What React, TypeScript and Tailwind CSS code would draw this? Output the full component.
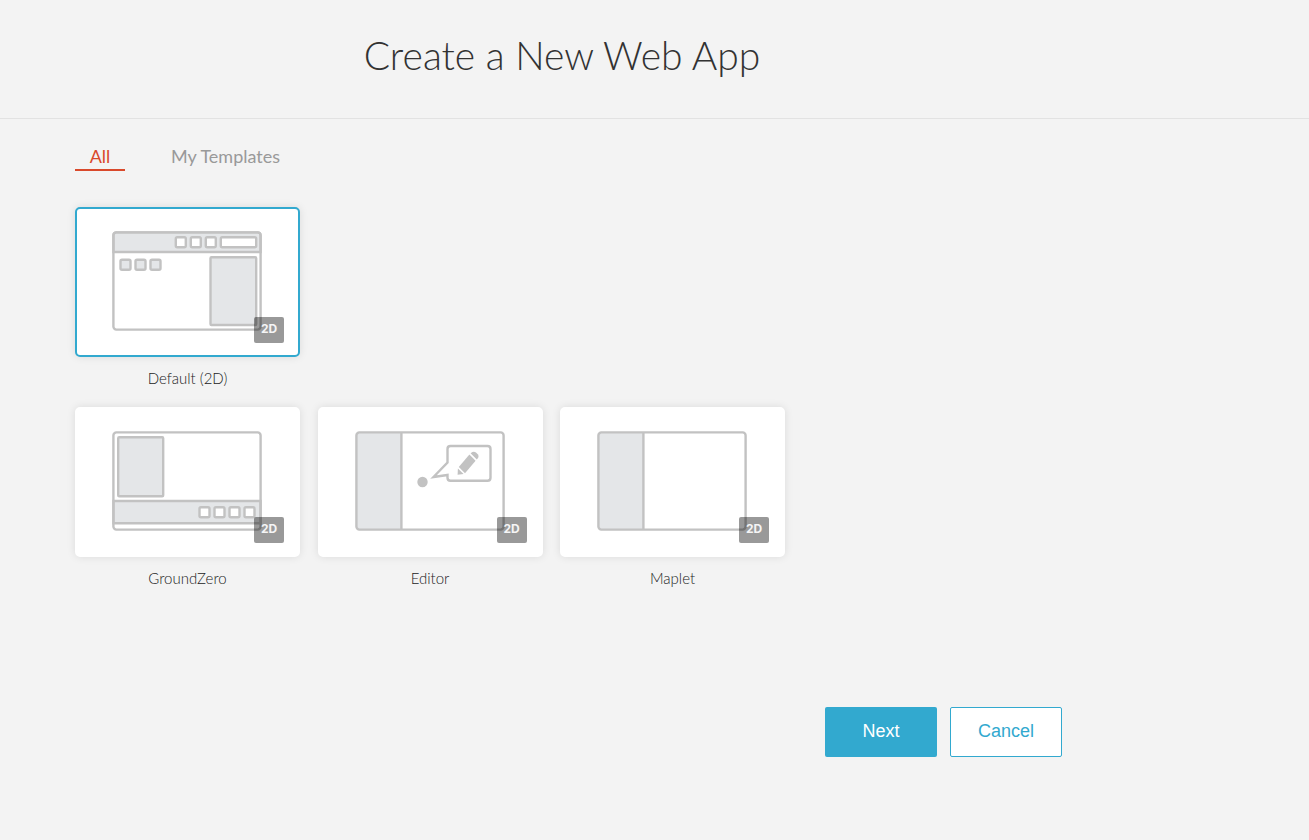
import type { ReactNode } from "react";
import { useState } from "react";

interface Template {
  id: string;
  title: string;
  art: ReactNode;
}

const Square = ({ x, y, fill = "#fff" }: { x: number; y: number; fill?: string }) => (
  <rect x={x} y={y} width="10" height="10" rx="1.5" fill={fill} />
);

function Frame({ children }: { children: ReactNode }) {
  return (
    <svg
      className="h-[100px] w-[150px]"
      viewBox="0 0 150 100"
      fill="none"
      stroke="#c2c2c2"
      strokeWidth="2.4"
      aria-hidden="true"
    >
      {children}
      <rect x="1.4" y="1.4" width="147.2" height="97.2" rx="3" />
    </svg>
  );
}

const DefaultArt = () => (
  <Frame>
    <path d="M1.4 21V4.4Q1.4 1.4 4.4 1.4H145.6Q148.6 1.4 148.6 4.4V21Z" fill="#e4e6e8" />
    <Square x={63.8} y={6.2} />
    <Square x={78.8} y={6.2} />
    <Square x={93.8} y={6.2} />
    <rect x="108.8" y="6.2" width="35.4" height="10" rx="1.5" fill="#fff" />
    <Square x={8.5} y={28.8} fill="#e4e6e8" />
    <Square x={23.5} y={28.8} fill="#e4e6e8" />
    <Square x={38.5} y={28.8} fill="#e4e6e8" />
    <rect x="98.5" y="26.2" width="45.7" height="67.8" rx="1" fill="#e4e6e8" />
  </Frame>
);

const GroundZeroArt = () => (
  <Frame>
    <rect x="6.2" y="6.2" width="45" height="59" rx="1" fill="#e4e6e8" />
    <path d="M1.4 70H148.6V92.2H1.4Z" fill="#e4e6e8" />
    <Square x={87.5} y={76.2} />
    <Square x={102.5} y={76.2} />
    <Square x={117.5} y={76.2} />
    <Square x={132.5} y={76.2} />
  </Frame>
);

const Sidebar = () => (
  <>
    <rect x="1.4" y="1.4" width="45" height="97.2" rx="3" fill="#e4e6e8" stroke="none" />
    <path d="M46.4 1.4V98.6" />
  </>
);

const EditorArt = () => (
  <Frame>
    <Sidebar />
    <circle cx="67.5" cy="51" r="5.2" fill="#c2c2c2" stroke="none" />
    <path d="M95.5 15H132.5Q135.5 15 135.5 18V46.7Q135.5 49.7 132.5 49.7H95.5Q92.5 49.7 92.5 46.7V44L78.5 46L92.5 31.5V18Q92.5 15 95.5 15Z" />
    <g fill="#c2c2c2" stroke="none">
      <path d="M114.4 23.6L120.6 29.8L110 42.2L103.8 36Z" />
      <path d="M102.9 37.4L108.6 43L102.6 43.8Z" />
      <path d="M115.6 22.2L117.4 20.9Q119.2 20.2 121 21.4L123 23.6Q124 25.2 123.2 26.8L121.8 28.6Z" />
    </g>
  </Frame>
);

const MapletArt = () => (
  <Frame>
    <Sidebar />
  </Frame>
);

const defaultTemplate: Template = { id: "default", title: "Default (2D)", art: <DefaultArt /> };

const templates: Template[] = [
  { id: "groundzero", title: "GroundZero", art: <GroundZeroArt /> },
  { id: "editor", title: "Editor", art: <EditorArt /> },
  { id: "maplet", title: "Maplet", art: <MapletArt /> },
];

interface TemplateCardProps {
  template: Template;
  checked: boolean;
  onSelect: (id: string) => void;
}

function TemplateCard({ template, checked, onSelect }: TemplateCardProps) {
  return (
    <label className="relative block w-[225px] cursor-pointer">
      <input
        type="radio"
        name="template"
        value={template.id}
        checked={checked}
        onChange={() => onSelect(template.id)}
        className="peer sr-only"
      />
      <span className="relative block h-[150px] rounded-[5px] border-2 border-white bg-white pt-[22px] pl-[35px] shadow-[0_0_8px_rgba(0,0,0,0.1)] peer-checked:border-[#32a9cf]">
        {template.art}
        <span className="absolute right-[14px] bottom-3 flex h-[26px] w-[30px] items-center justify-center rounded-xs bg-black/40 pb-0.5 font-['Inter',sans-serif] text-xs font-bold text-white/90">
          2D
        </span>
      </span>
      <span className="mt-[11px] block text-center text-[15px] leading-5 font-light text-[#222]">
        {template.title}
      </span>
    </label>
  );
}

export default function App() {
  const [tab, setTab] = useState("all");
  const [selected, setSelected] = useState("default");

  return (
    <div className="min-h-screen bg-[#f3f3f3] font-['Lato',sans-serif]">
      <header className="border-b border-[#e2e2e2] pt-8 pb-10">
        <h1 className="max-w-[1124px] text-center text-[39px] leading-[46px] font-light text-[#323232]">
          Create a New Web App
        </h1>
      </header>
      <main className="max-w-[1124px] px-[62px]">
        <div className="pl-[13px]">
          <nav className="flex gap-8 pt-6 text-lg leading-[26px]">
            <button
              type="button"
              onClick={() => setTab("all")}
              className={
                tab === "all"
                  ? "w-[50px] border-b-2 border-[#d9492b] text-[#d9492b]"
                  : "w-[50px] border-b-2 border-transparent text-[#999]"
              }
            >
              All
            </button>
            <button
              type="button"
              onClick={() => setTab("mine")}
              className={
                tab === "mine"
                  ? "border-b-2 border-[#d9492b] px-3.5 text-[#d9492b]"
                  : "border-b-2 border-transparent px-3.5 text-[#999]"
              }
            >
              My Templates
            </button>
          </nav>
          <div className="mt-9 flex max-w-[710px] flex-col gap-[19px]">
            <TemplateCard
              template={defaultTemplate}
              checked={selected === defaultTemplate.id}
              onSelect={setSelected}
            />
            <div className="flex flex-wrap justify-between gap-y-[19px]">
              {templates.map((template) => (
                <TemplateCard
                  key={template.id}
                  template={template}
                  checked={selected === template.id}
                  onSelect={setSelected}
                />
              ))}
            </div>
          </div>
        </div>
        <div className="mt-[119px] flex justify-end gap-[13px] font-['Liberation_Sans',sans-serif] text-lg">
          <button type="button" className="h-[50px] w-28 rounded-xs bg-[#32a9cf] pb-0.5 text-white">
            Next
          </button>
          <button
            type="button"
            className="h-[50px] w-28 rounded-xs border border-[#32a9cf] bg-white pb-0.5 text-[#32a9cf]"
          >
            Cancel
          </button>
        </div>
      </main>
    </div>
  );
}
